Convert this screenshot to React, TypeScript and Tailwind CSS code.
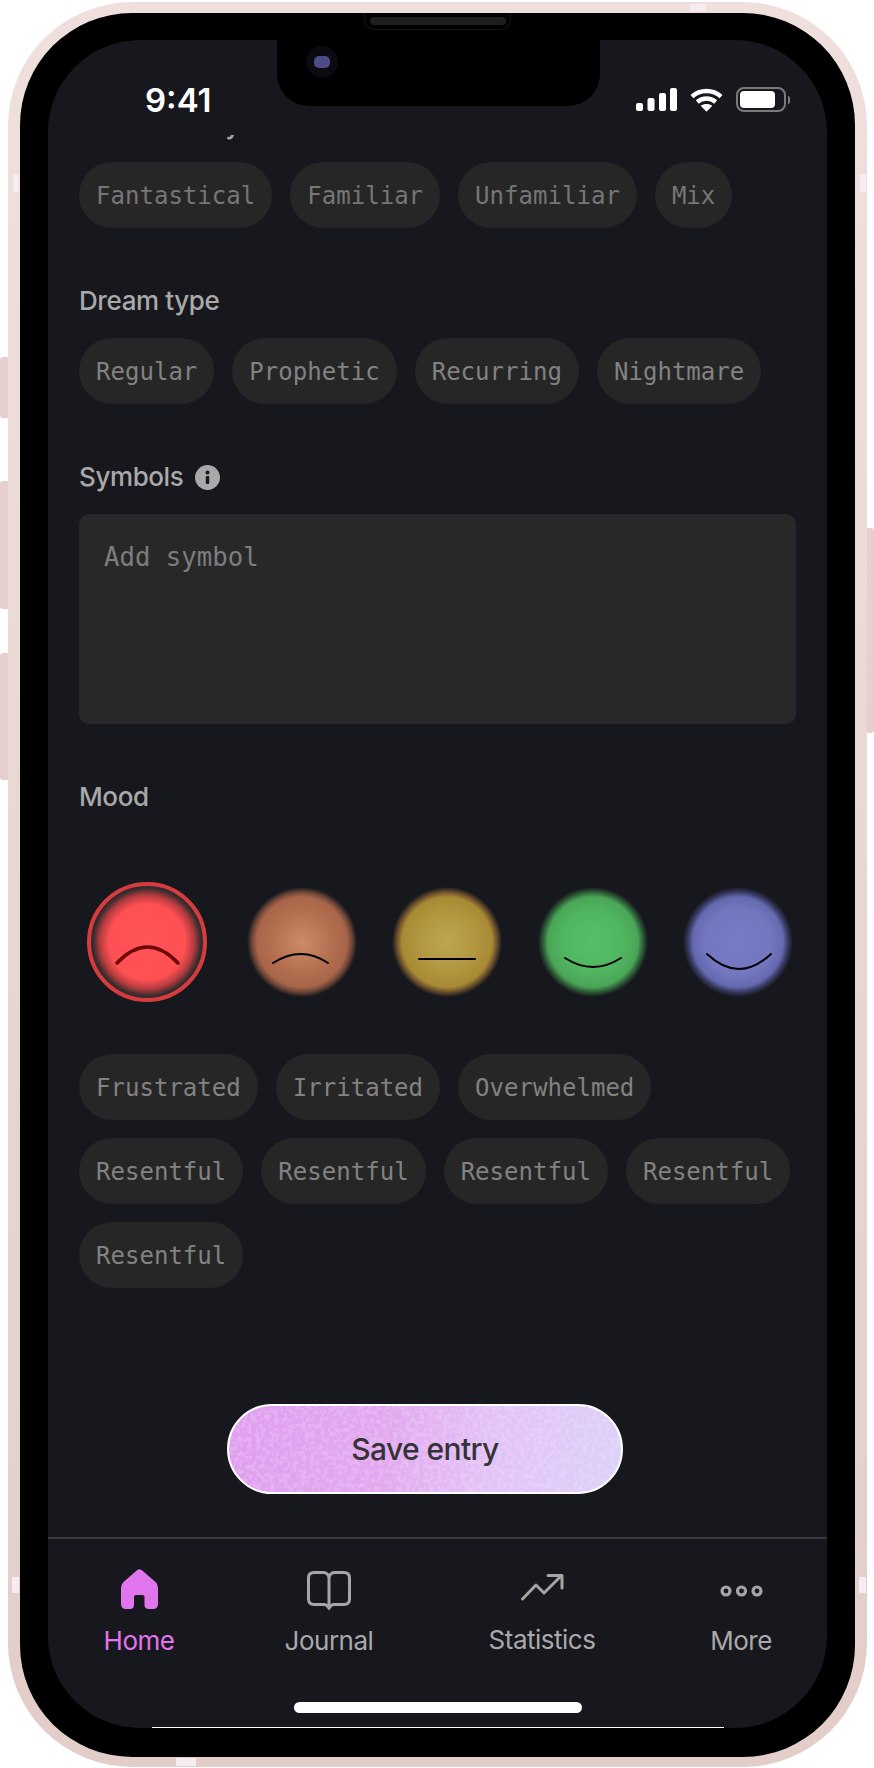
import React from "react";

const labelFont = "font-['Inter',sans-serif]";

function Chip({ children, dim }: { children: React.ReactNode; dim?: boolean }) {
  return (
    <span className={`flex h-[66px] items-center rounded-full bg-[#262626] px-[17px] pt-[2px] font-['DejaVu_Sans_Mono',monospace] text-[24.05px] ${dim ? "text-[#767676]" : "text-[#828282]"}`}>
      {children}
    </span>
  );
}

function Label({ children }: { children: React.ReactNode }) {
  return (
    <h3 className={`${labelFont} text-[26px] leading-[32px] font-medium tracking-[-0.4px] text-[#a9a9a9]`}>
      {children}
    </h3>
  );
}

function MoodFace({ mouth, stroke = "#000", width = 2 }: { mouth: string; stroke?: string; width?: number }) {
  return (
    <svg viewBox="0 0 110 110" className="size-full">
      <path d={mouth} fill="none" stroke={stroke} strokeWidth={width} strokeLinecap="round" />
    </svg>
  );
}

function SignalIcon() {
  return (
    <svg width="41" height="24" viewBox="0 0 41 24" fill="#fff">
      <rect x="0" y="15" width="7" height="8" rx="2" />
      <rect x="11.5" y="10" width="7" height="13" rx="2" />
      <rect x="23" y="5" width="7" height="18" rx="2" />
      <rect x="34" y="0" width="7" height="23" rx="2" />
    </svg>
  );
}

function WifiIcon() {
  return (
    <svg width="33" height="24" viewBox="0 0 34 24" fill="none" stroke="#fff" strokeWidth="4.6">
      <path d="M2 8.5 C10.5 0.8 23.5 0.8 32 8.5" />
      <path d="M7.5 14 C13 9.4 21 9.4 26.5 14" />
      <path d="M17 24 L11 18 C14.5 15.4 19.5 15.4 23 18 Z" fill="#fff" stroke="none" />
    </svg>
  );
}

function BatteryIcon() {
  return (
    <div className="flex items-center gap-[2px]">
      <div className="flex h-[25px] w-[50px] items-center rounded-[8px] border-2 border-[#7a7a7a] p-[2px]">
        <div className="h-[17px] w-[35px] rounded-[4px] bg-white" />
      </div>
      <div className="h-[8px] w-[2px] rounded-r-full bg-[#7a7a7a]" />
    </div>
  );
}

function HomeIcon() {
  return (
    <svg width="37" height="40" viewBox="0 0 37 40" fill="#e175ee">
      <path d="M16 1.2 Q18.5 -0.6 21 1.2 L34.5 13 Q37 15.2 37 18.5 V35 Q37 40 32 40 H28 Q23.5 40 23.5 36 V28 Q23.5 26 21.5 26 H15 Q13 26 13 28 V36 Q13 40 9 40 H5 Q0 40 0 35 V18.5 Q0 15.2 2.5 13 Z" />
    </svg>
  );
}

function BookIcon() {
  return (
    <svg width="44" height="40" viewBox="0 0 44 40" fill="none" stroke="#a5a5a5" strokeWidth="3" strokeLinejoin="round">
      <path d="M22 6 C21 3 19 1.5 16 1.5 H7 Q1.5 1.5 1.5 7 V28 Q1.5 33.5 7 33.5 H17 Q20 33.5 22 36.5 Q24 33.5 27 33.5 H37 Q42.5 33.5 42.5 28 V7 Q42.5 1.5 37 1.5 H28 C25 1.5 23 3 22 6 Z" />
      <path d="M22 6 V36" />
      <path d="M18.5 35 H25.5 L22 39.5 Z" fill="#a5a5a5" stroke="none" />
    </svg>
  );
}

function TrendIcon() {
  return (
    <svg width="43" height="27" viewBox="0 0 43 27" fill="none" stroke="#a5a5a5" strokeWidth="3" strokeLinecap="round" strokeLinejoin="round">
      <path d="M1.5 25 L15 11 L23 19 L40 2" />
      <path d="M27 1.5 H41 V14" />
    </svg>
  );
}

function DotsIcon() {
  return (
    <svg width="43" height="12" viewBox="0 0 43 12" fill="none" stroke="#a5a5a5" strokeWidth="3.2">
      <circle cx="6" cy="6" r="4" />
      <circle cx="21.5" cy="6" r="4" />
      <circle cx="37" cy="6" r="4" />
    </svg>
  );
}

function Tab({ icon, label, active, iconBox }: { icon: React.ReactNode; label: string; active?: boolean; iconBox: string }) {
  return (
    <div className="flex flex-col items-center">
      <div className={`flex items-center justify-center ${iconBox}`}>{icon}</div>
      <span className={`${labelFont} text-[26px] leading-[32px] tracking-[-0.5px] ${active ? "text-[#e175ee]" : "text-[#a9a9a9]"}`}>
        {label}
      </span>
    </div>
  );
}

export default function App() {
  return (
    <div className="relative h-[1768px] w-[874px] overflow-hidden bg-white pt-[2px] pl-[8px]">
      {/* side buttons */}
      <div className="absolute top-[357px] left-0 h-[61px] w-[8px] rounded-l-[3px] bg-[#e6cfcd]" />
      <div className="absolute top-[481px] left-0 h-[128px] w-[8px] rounded-l-[3px] bg-[#e6cfcd]" />
      <div className="absolute top-[653px] left-0 h-[127px] w-[8px] rounded-l-[3px] bg-[#e6cfcd]" />
      <div className="absolute top-[528px] right-0 h-[205px] w-[7px] rounded-r-[3px] bg-[#e6cfcd]" />

      <div className="h-[1765px] w-[859px] rounded-[124px] bg-linear-to-b from-[#f0e0dd] to-[#e2cdc9] pt-[11px] pr-[12px] pb-[10px] pl-[12px]">
        <div className="relative h-[1744px] w-[835px] rounded-[112px] bg-black pt-[27px] pr-[28px] pb-[29px] pl-[28px]">
          {/* speaker */}
          <div className="absolute top-0 left-[344px] flex h-[17px] w-[147px] items-center justify-center rounded-b-[10px] border border-t-0 border-[#151515]">
            <div className="h-[8px] w-[136px] rounded-full bg-[#1e1e1e]" />
          </div>

          <div className="relative flex h-[1688px] w-[779px] flex-col overflow-hidden rounded-[92px] bg-[#17181d]">
            {/* notch */}
            <div className="absolute top-0 left-[229px] z-10 flex h-[66px] w-[323px] items-center rounded-b-[32px] bg-black pl-[29px]">
              <div className="flex size-[32px] -translate-y-[11px] items-center justify-center rounded-full bg-[#0a0a10]">
                <div className="h-[12px] w-[16px] rounded-[5px] bg-[#4b4b85]" />
              </div>
            </div>

            {/* status bar */}
            <div className="flex h-[95px] shrink-0 items-start justify-between pt-[44px] pr-[37px] pl-[97px]">
              <span className={`${labelFont} text-[33px] leading-[32px] font-semibold text-white`}>9:41</span>
              <div className="flex items-center gap-[13px] pt-[3px]">
                <SignalIcon />
                <WifiIcon />
                <BatteryIcon />
              </div>
            </div>

            {/* scrolled form */}
            <main className="min-h-0 flex-1 overflow-hidden px-[31px]">
              <div className="-mt-[26px]">
                <Label>Dream reality</Label>
                <div className="mt-[21px] flex gap-[18px]">
                  <Chip dim>Fantastical</Chip>
                  <Chip dim>Familiar</Chip>
                  <Chip dim>Unfamiliar</Chip>
                  <Chip dim>Mix</Chip>
                </div>

                <div className="mt-[57px]">
                  <Label>Dream type</Label>
                </div>
                <div className="mt-[21px] flex gap-[18px]">
                  <Chip>Regular</Chip>
                  <Chip>Prophetic</Chip>
                  <Chip>Recurring</Chip>
                  <Chip>Nightmare</Chip>
                </div>

                <div className="mt-[57px] flex items-center gap-[12px]">
                  <Label>Symbols</Label>
                  <svg width="25" height="25" viewBox="0 0 25 25">
                    <circle cx="12.5" cy="12.5" r="12.5" fill="#a9a9a9" />
                    <circle cx="12.5" cy="7.5" r="2" fill="#17181d" />
                    <rect x="10.8" y="11" width="3.4" height="8" rx="0.8" fill="#17181d" />
                  </svg>
                </div>
                <div className="mt-[21px] h-[210px] w-[717px] rounded-[10px] bg-[#282828] px-[25px] pt-[29px] font-['DejaVu_Sans_Mono',monospace] text-[25.7px] leading-[28px] text-[#7d7d7d]">
                  Add symbol
                </div>

                <div className="mt-[57px]">
                  <Label>Mood</Label>
                </div>

                <div className="mt-[69px] flex items-center pl-[8px]">
                  <div className="size-[120px] rounded-full border-[4px] border-[#d63c3e] bg-[radial-gradient(circle_closest-side,#ff5357_0%,#ff5054_68%,#b53c3f_84%,#3b2c2d_96%,#2e2a2c_100%)] p-[1px]">
                    <MoodFace mouth="M25 76 Q55.5 44 86 76" stroke="#6e0708" width={3.6} />
                  </div>
                  <div className="ml-[40px] size-[110px] rounded-full bg-[radial-gradient(circle_closest-side,#cb8b6b_0%,#b46f4f_55%,#a9654a_82%,#6d4537_91%,#17181d_100%)]">
                    <MoodFace mouth="M26 76 Q54 58 81 76" />
                  </div>
                  <div className="ml-[35px] size-[110px] rounded-full bg-[radial-gradient(circle_closest-side,#bca552_0%,#b1963f_55%,#a78a33_82%,#6b4f2d_91%,#17181d_100%)]">
                    <MoodFace mouth="M27 72 H83" />
                  </div>
                  <div className="ml-[36px] size-[110px] rounded-full bg-[radial-gradient(circle_closest-side,#55c066_0%,#50b660_55%,#4aa557_82%,#2d5c38_91%,#17181d_100%)]">
                    <MoodFace mouth="M27 71 Q55 89 83 71" />
                  </div>
                  <div className="ml-[35px] size-[110px] rounded-full bg-[radial-gradient(circle_closest-side,#777bc6_0%,#7377c0_60%,#6569af_82%,#383a62_91%,#17181d_100%)]">
                    <MoodFace mouth="M24 67 Q56 97 88 67" />
                  </div>
                </div>

                <div className="mt-[52px] flex flex-col gap-[18px]">
                  <div className="flex gap-[18px]">
                    <Chip>Frustrated</Chip>
                    <Chip>Irritated</Chip>
                    <Chip>Overwhelmed</Chip>
                  </div>
                  <div className="flex gap-[18px]">
                    <Chip>Resentful</Chip>
                    <Chip>Resentful</Chip>
                    <Chip>Resentful</Chip>
                    <Chip>Resentful</Chip>
                  </div>
                  <div className="flex gap-[18px]">
                    <Chip>Resentful</Chip>
                  </div>
                </div>

                <div className="mt-[116px] pl-[148px]">
                  <button className={`relative flex h-[90px] w-[396px] items-center justify-center overflow-hidden rounded-full border-2 border-white bg-[linear-gradient(100deg,#e09eef_0%,#e3a8ef_40%,#e3c2f7_65%,#dcd2f9_100%)] ${labelFont} text-[30px] font-medium tracking-[-0.6px] text-[#343438]`}>
                    <svg className="absolute inset-0 size-full opacity-20">
                      <filter id="grain">
                        <feTurbulence type="fractalNoise" baseFrequency="0.22" numOctaves="3" />
                        <feColorMatrix values="0 0 0 0 0.95  0 0 0 0 0.85  0 0 0 0 1  0 0 0 7 -3.2" />
                      </filter>
                      <rect width="100%" height="100%" filter="url(#grain)" />
                    </svg>
                    <span className="relative">Save entry</span>
                  </button>
                </div>
              </div>
            </main>

            {/* tab bar */}
            <nav className="h-[191px] shrink-0 border-t-2 border-[#3a3a3c] pt-[30px]">
              <div className="grid grid-cols-[182px_198px_228px_170px]">
                <Tab icon={<HomeIcon />} label="Home" active iconBox="h-[56px] items-start" />
                <Tab icon={<BookIcon />} label="Journal" iconBox="h-[56px] items-start pt-[2px]" />
                <Tab icon={<TrendIcon />} label="Statistics" iconBox="h-[55px] items-start pt-[5px]" />
                <Tab icon={<DotsIcon />} label="More" iconBox="h-[56px] items-start pt-[16px]" />
              </div>
              <div className="mx-auto mt-[45px] h-[11px] w-[288px] rounded-full bg-white" />
            </nav>
          </div>
          <div className="absolute bottom-[29px] left-[132px] h-[1px] w-[572px] bg-white" />
        </div>
      </div>

      {/* antenna bands */}
      <div className="absolute top-[174px] left-[13px] h-[18px] w-[6px] bg-[#f6edf2]" />
      <div className="absolute top-[1577px] left-[12px] h-[16px] w-[7px] bg-[#f6edf2]" />
      <div className="absolute top-[174px] right-[8px] h-[18px] w-[6px] bg-[#f6edf2]" />
      <div className="absolute top-[1577px] right-[8px] h-[16px] w-[7px] bg-[#f6edf2]" />
      <div className="absolute top-[4px] left-[690px] h-[7px] w-[16px] bg-[#f6edf2]" />
      <div className="absolute top-[1758px] left-[176px] h-[8px] w-[20px] bg-[#f6edf2]" />
    </div>
  );
}
